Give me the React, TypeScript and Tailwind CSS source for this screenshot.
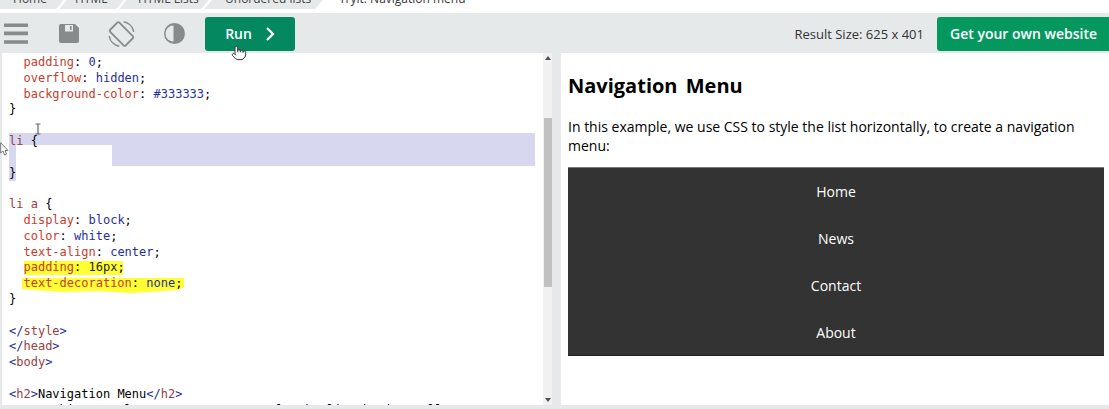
import { Pointer } from "lucide-react";

const crumbs = [
  { label: "Home", box: "-ml-[10px] w-[70px] pl-[18px]" },
  { label: "HTML", box: "w-[57px] pl-[7px]" },
  { label: "HTML Lists", box: "w-[82px] pl-[10px]" },
  { label: "Unordered lists", box: "w-[111px] pl-[12px]" },
];
const navLinks = ["Home", "News", "Contact", "About"];

const P = ({ children }: { children: string }) => <span className="text-[#c93b2d]">{children}</span>;
const V = ({ children }: { children: string }) => <span className="text-[#1f2f9c]">{children}</span>;
const T = ({ children }: { children: string }) => <span className="text-[#99403f]">{children}</span>;

function Line({ children }: { children?: React.ReactNode }) {
  return <div className="h-[15.8px] whitespace-pre leading-[15.8px]">{children}</div>;
}

export default function App() {
  return (
    <div className="relative h-[409px] w-[1109px] overflow-hidden bg-[#e6e9ea] font-['Open_Sans',sans-serif]">
      <div className="h-[13px] overflow-hidden bg-white">
        <div className="flex h-[9px] gap-[3px] text-[12px] leading-[9px] text-[#444]">
          {crumbs.map((c) => (
            <div key={c.label} className={`shrink-0 -skew-x-[40deg] bg-[#e6e9ea] ${c.box}`}>
              <span className="-mt-[6px] block skew-x-[40deg] whitespace-nowrap">{c.label}</span>
            </div>
          ))}
          <span className="-mt-[6px] ml-[17px] block whitespace-nowrap text-[#333]">Tryit: Navigation menu</span>
        </div>
      </div>

      <div className="flex h-10 items-center">
        <svg width="190" height="40" viewBox="0 0 190 40" className="shrink-0 text-[#888b8c]">
          <path d="M4 12.2h24M4 20.4h24M4 29h24" stroke="currentColor" strokeWidth="3.6" fill="none" />
          <path d="M61 11h14l4 4v13a2 2 0 0 1-2 2H61a2 2 0 0 1-2-2V13a2 2 0 0 1 2-2z" fill="currentColor" />
          <rect x="65" y="12" width="8" height="6.5" fill="#e6e9ea" />
          <rect x="70" y="13" width="1.6" height="4" fill="currentColor" />
          <rect x="115" y="10" width="13" height="22" rx="1.5" transform="rotate(-45 121.5 21)" fill="none" stroke="currentColor" strokeWidth="1.8" />
          <path d="M123.7 8.7A12.5 12.5 0 0 1 133.8 18.8M119.3 33.3A12.5 12.5 0 0 1 109.2 23.2" fill="none" stroke="currentColor" strokeWidth="1.5" />
          <circle cx="174.5" cy="20.5" r="10.5" fill="currentColor" />
          <path d="M173.5 12.5a8 8 0 0 0 0 16z" fill="#e6e9ea" />
        </svg>
        <button className="ml-[15px] mt-[1px] flex h-[34px] w-[90px] items-center justify-center gap-[13px] rounded-[3px] bg-[#04885f] text-[14px] font-semibold text-white">
          Run
          <svg width="10" height="14" viewBox="0 0 10 14" fill="none" stroke="currentColor" strokeWidth="2.2">
            <path d="M2 1l6 6-6 6" />
          </svg>
        </button>
        <div className="ml-auto mr-[13px] mt-[3px] text-[13px] text-[#333]">Result Size: 625 x 401</div>
        <button className="mt-[1px] h-[34px] w-[172px] rounded-l-[3px] bg-[#04985f] pl-[1px] text-[14px] font-semibold text-white">
          Get your own website
        </button>
      </div>

      <div className="flex h-[352px]">
        <div className="ml-[2px] flex w-[550px] bg-white">
          <div className="relative flex-1 overflow-hidden pl-[7px] pt-[2px] font-['DejaVu_Sans_Mono',monospace] text-[12px] text-black">
            <svg width="200" height="250" className="absolute left-0 top-0">
              <path d="M22 208H121V222H22Z" fill="#ffff33" />
              <path d="M20 225H182V234L176 237L130 240L95 238L60 239L20 236Z" fill="#ffff33" />
            </svg>
            <div className="relative">
              <Line>  <P>padding</P>: <V>0</V>;</Line>
              <Line>  <P>overflow</P>: <V>hidden</V>;</Line>
              <Line>  <P>background-color</P>: <V>#333333</V>;</Line>
              <Line>{"}"}</Line>
              <Line />
              <div className="-mt-px mr-[8px] bg-[#d7d8ef] pt-px">
                <Line><T>li</T> {"{"}</Line>
                <div className="-mt-[5px] ml-[7px] h-[20.8px] w-[96px] bg-white" />
              </div>
              <div className="w-[7px] bg-[#d7d8ef]">
                <Line>{"}"}</Line>
              </div>
              <Line />
              <Line><T>li a</T> {"{"}</Line>
              <Line>  <P>display</P>: <V>block</V>;</Line>
              <Line>  <P>color</P>: <V>white</V>;</Line>
              <Line>  <P>text-align</P>: <V>center</V>;</Line>
              <Line>  <P>padding</P>: <span className="text-[#222]">16px</span>;</Line>
              <Line>  <P>text-decoration</P>: <V>none</V>;</Line>
              <Line>{"}"}</Line>
              <Line />
              <Line><V>&lt;/</V><T>style</T><V>&gt;</V></Line>
              <Line><V>&lt;/</V><T>head</T><V>&gt;</V></Line>
              <Line><V>&lt;</V><T>body</T><V>&gt;</V></Line>
              <Line />
              <Line><V>&lt;</V><T>h2</T><V>&gt;</V>Navigation Menu<V>&lt;/</V><T>h2</T><V>&gt;</V></Line>
              <Line><V>&lt;</V><T>p</T><V>&gt;</V>In this example, we use CSS to style the list horizontally, to create</Line>
            </div>
          </div>
          <div className="flex w-[9px] shrink-0 flex-col items-center bg-[#f1f1f1]">
            <div className="mt-[3px] h-0 w-0 border-x-[3px] border-b-[4px] border-x-transparent border-b-[#505050]" />
            <div className="mt-[58px] h-[169px] w-[8px] bg-[#c1c1c1]" />
            <div className="mt-auto mb-[3px] h-0 w-0 border-x-[3px] border-t-[4px] border-x-transparent border-t-[#505050]" />
          </div>
        </div>

        <div className="ml-[9px] flex-1 bg-white pl-[7px] pr-[5px] text-black">
          <h2 className="mt-[19px] text-[20px] leading-7 font-bold [word-spacing:3px]">Navigation Menu</h2>
          <p className="mt-[17px] text-[14px] leading-[19px]">
            In this example, we use CSS to style the list horizontally, to create a navigation menu:
          </p>
          <ul className="mt-[12px] h-[189px] overflow-hidden border-y border-t-[#777] border-b-[#1f1f1f] bg-[#333333]">
            {navLinks.map((l) => (
              <li key={l} className="h-[47px] text-center text-[14px] leading-[47px] text-white">{l}</li>
            ))}
          </ul>
        </div>
      </div>

      {/* recorded mouse cursors */}
      <Pointer size={16} strokeWidth={1.5} className="absolute left-[231px] top-[45px] fill-white text-[#333]" />
      <svg width="8" height="12" viewBox="0 0 8 12" className="absolute left-[34px] top-[123px] text-[#666]">
        <path d="M1.5 1H6.5M4 1V11M1.5 11H6.5" stroke="currentColor" strokeWidth="1.2" fill="none" />
      </svg>
      <svg width="9" height="14" viewBox="0 0 9 14" className="absolute left-0 top-[142px]">
        <path d="M.7.7V11L3 9l1.6 4 2-.8L5 8.500h3z" fill="#fff" stroke="#777" strokeWidth="1" />
      </svg>
    </div>
  );
}
